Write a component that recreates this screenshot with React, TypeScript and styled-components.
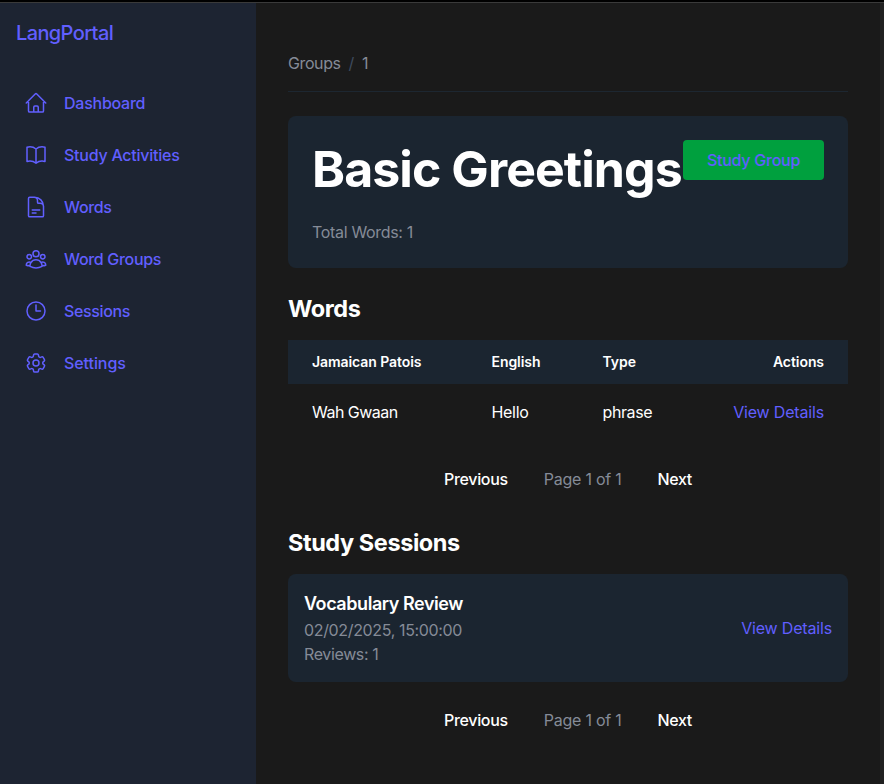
import React from "react";
import styled, { createGlobalStyle } from "styled-components";
import {
  HiOutlineHome,
  HiOutlineBookOpen,
  HiOutlineDocumentText,
  HiOutlineUserGroup,
  HiOutlineClock,
  HiOutlineCog6Tooth,
} from "react-icons/hi2";

const GlobalStyle = createGlobalStyle`
  *, *::before, *::after { box-sizing: border-box; }
  body {
    margin: 0;
    background: #1a1a1a;
    color: #fff;
    font: 400 16px/24px Inter, sans-serif;
    letter-spacing: -0.25px;
    overflow: hidden;
  }
  h1, h2, h3, p { margin: 0; }
  a { color: #615fff; text-decoration: none; }
`;

const Frame = styled.div`
  height: 784px;
  display: flex;
  flex-direction: column;
  border-top: 2px solid #000;
`;

const Shell = styled.div`
  flex: 1;
  display: flex;
  border-top: 1px solid #3a3a3a;
`;

const Sidebar = styled.aside`
  width: 256px;
  flex: none;
  background: #1d2432;
`;

const Logo = styled.a`
  display: block;
  padding: 16px;
  font-size: 20px;
  line-height: 28px;
  font-weight: 500;
  letter-spacing: -0.62px;
`;

const Nav = styled.nav`
  display: flex;
  flex-direction: column;
  gap: 4px;
  padding: 16px 8px;
`;

const NavLink = styled.a<{ $spacing: number }>`
  display: flex;
  align-items: center;
  gap: 16px;
  height: 48px;
  padding: 0 16px;
  font-weight: 500;
  letter-spacing: ${(p) => p.$spacing}px;

  svg { width: 24px; height: 24px; }
`;

const Main = styled.main`
  flex: 1;
  min-width: 0;
  padding: 48px 32px 0;
`;

const ScrollTrack = styled.div`
  width: 4px;
  background: #212121;
`;

const Breadcrumb = styled.div`
  display: flex;
  gap: 8px;
  height: 41px;
  margin-bottom: 24px;
  border-bottom: 1px solid #1d2731;
  color: #858b97;
  letter-spacing: -0.4px;
`;

const Slash = styled.span`
  color: #3e4b5e;
`;

const Hero = styled.section`
  display: flex;
  justify-content: space-between;
  align-items: flex-start;
  height: 152px;
  padding: 24px;
  border-radius: 8px;
  background: #1b2530;
`;

const Title = styled.h1`
  font-size: 50px;
  line-height: 56px;
  font-weight: 700;
  letter-spacing: -0.93px;
  white-space: nowrap;
  margin: 1px 0 23px;
`;

const Muted = styled.p<{ $spacing?: number }>`
  color: #858b97;
  letter-spacing: ${(p) => p.$spacing ?? -0.32}px;
`;

const StudyButton = styled.a`
  flex: none;
  width: 141px;
  height: 40px;
  line-height: 40px;
  text-align: center;
  border-radius: 4px;
  background: #00a03e;
  font-weight: 500;
`;

const SectionTitle = styled.h2<{ $top: number }>`
  margin: ${(p) => p.$top}px 0 15px;
  font-size: 23.5px;
  line-height: 32px;
  font-weight: 700;
  letter-spacing: -0.42px;
`;

const Table = styled.div`
  display: grid;
  grid-template-columns: 179.5px 111px 1fr auto;
`;

const HeadCell = styled.div<{ $align?: string }>`
  height: 44px;
  line-height: 44px;
  padding: 0 24px;
  background: #1b2530;
  font-size: 14px;
  font-weight: 600;
  letter-spacing: -0.07px;
  text-align: ${(p) => p.$align ?? "left"};
`;

const Cell = styled.div<{ $align?: string; $spacing?: number }>`
  height: 56px;
  line-height: 56px;
  padding: 0 24px;
  text-align: ${(p) => p.$align ?? "left"};
  letter-spacing: ${(p) => p.$spacing ?? -0.3}px;
`;

const DetailLink = styled.a`
  white-space: nowrap;
  letter-spacing: -0.17px;
`;

const Pager = styled.div<{ $top: number }>`
  display: flex;
  justify-content: center;
  margin-top: ${(p) => p.$top}px;
`;

const PagerButton = styled.button`
  height: 40px;
  padding: 0 20px;
  border: 0;
  background: none;
  color: #fff;
  font: inherit;
  font-weight: 500;
  letter-spacing: -0.32px;
`;

const PageLabel = styled.span`
  padding: 0 16px;
  line-height: 40px;
  color: #858b97;
`;

const Session = styled.section`
  display: flex;
  align-items: center;
  justify-content: space-between;
  height: 108px;
  padding: 16px;
  border-radius: 8px;
  background: #1b2530;
`;

const SessionName = styled.h3`
  font-size: 18px;
  line-height: 28px;
  font-weight: 600;
  letter-spacing: -0.44px;
`;

const navItems = [
  { label: "Dashboard", Icon: HiOutlineHome, spacing: -0.25 },
  { label: "Study Activities", Icon: HiOutlineBookOpen, spacing: -0.25 },
  { label: "Words", Icon: HiOutlineDocumentText, spacing: -0.35 },
  { label: "Word Groups", Icon: HiOutlineUserGroup, spacing: -0.32 },
  { label: "Sessions", Icon: HiOutlineClock, spacing: -0.35 },
  { label: "Settings", Icon: HiOutlineCog6Tooth, spacing: -0.07 },
];

function Pagination({ top }: { top: number }) {
  return (
    <Pager $top={top}>
      <PagerButton>Previous</PagerButton>
      <PageLabel>Page 1 of 1</PageLabel>
      <PagerButton>Next</PagerButton>
    </Pager>
  );
}

export default function App() {
  return (
    <Frame>
      <GlobalStyle />
      <Shell>
        <Sidebar>
          <Logo>LangPortal</Logo>
          <Nav>
            {navItems.map(({ label, Icon, spacing }) => (
              <NavLink key={label} $spacing={spacing}>
                <Icon />
                {label}
              </NavLink>
            ))}
          </Nav>
        </Sidebar>
        <Main>
          <Breadcrumb>
            <span>Groups</span>
            <Slash>/</Slash>
            <span>1</span>
          </Breadcrumb>
          <Hero>
            <div>
              <Title>Basic Greetings</Title>
              <Muted>Total Words: 1</Muted>
            </div>
            <StudyButton>Study Group</StudyButton>
          </Hero>
          <SectionTitle $top={25}>Words</SectionTitle>
          <Table>
            <HeadCell>Jamaican Patois</HeadCell>
            <HeadCell>English</HeadCell>
            <HeadCell>Type</HeadCell>
            <HeadCell $align="right">Actions</HeadCell>
            <Cell $spacing={-0.52}>Wah Gwaan</Cell>
            <Cell>Hello</Cell>
            <Cell $spacing={-0.4}>phrase</Cell>
            <Cell $align="right">
              <DetailLink>View Details</DetailLink>
            </Cell>
          </Table>
          <Pagination top={19} />
          <SectionTitle $top={28}>Study Sessions</SectionTitle>
          <Session>
            <div>
              <SessionName>Vocabulary Review</SessionName>
              <Muted $spacing={-0.35}>02/02/2025, 15:00:00</Muted>
              <Muted $spacing={-0.37}>Reviews: 1</Muted>
            </div>
            <DetailLink>View Details</DetailLink>
          </Session>
          <Pagination top={18} />
        </Main>
        <ScrollTrack />
      </Shell>
    </Frame>
  );
}
